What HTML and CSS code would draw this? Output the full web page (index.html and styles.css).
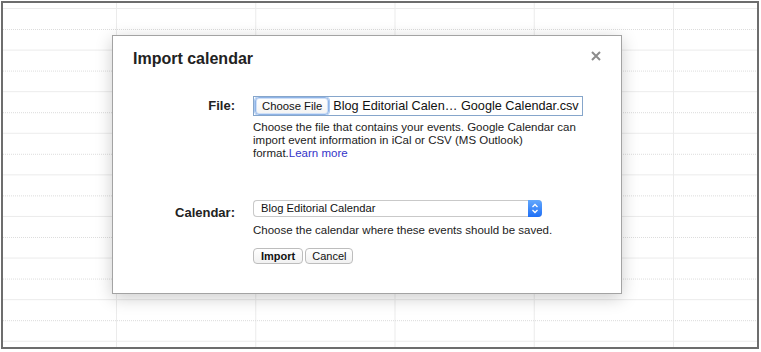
FILE: index.html
```html
<!DOCTYPE html>
<html lang="en">
<head>
    <meta charset="UTF-8">
    <meta name="viewport" content="width=device-width, initial-scale=1.0">
    <title>Import calendar</title>
    <link rel="stylesheet" href="styles.css">
</head>
<body>
    <div class="frame">
        <div class="grid"></div>

        <!-- import dialog -->
        <div class="dialog">
            <div class="dialog-head">
                <h2>Import calendar</h2>
                <svg class="close" width="10" height="10" viewBox="0 0 10 10">
                    <path d="M1 1 L9 9 M9 1 L1 9" stroke="#8c8c8c" stroke-width="2"/>
                </svg>
            </div>

            <div class="form-row">
                <label class="label">File:</label>
                <div class="control">
                    <div class="file-box">
                        <span class="file-btn">Choose File</span>
                        <span class="file-name">Blog Editorial Calen… Google Calendar.csv</span>
                    </div>
                    <p class="hint first">Choose the file that contains your events. Google Calendar can import event information in iCal or CSV (MS Outlook) format.<a href="#">Learn more</a></p>
                </div>
            </div>

            <div class="form-row cal-row">
                <label class="label cal-label">Calendar:</label>
                <div class="control">
                    <div class="select">
                        <span class="select-text">Blog Editorial Calendar</span>
                        <span class="select-arrow">
                            <svg width="14" height="17" viewBox="0 0 14 17">
                                <path d="M4.5 7 L7 4.5 L9.5 7 M4.5 10 L7 12.5 L9.5 10" fill="none" stroke="#fff" stroke-width="1.3"/>
                            </svg>
                        </span>
                    </div>
                    <p class="hint second">Choose the calendar where these events should be saved.</p>
                    <div class="buttons">
                        <button class="btn primary">Import</button>
                        <button class="btn">Cancel</button>
                    </div>
                </div>
            </div>
        </div>
    </div>
</body>
</html>
```

FILE: styles.css
```css
body { margin: 0; font-family: "Liberation Sans", Arial, sans-serif; color: #222; background: #fff; }

.frame {
    position: relative;
    margin: 1px 0 0 1px;
    width: 758px;
    height: 348px;
    border: 2px solid #6d6d6d;
    box-sizing: border-box;
    overflow: hidden;
}

/* calendar grid behind the dialog */
.grid {
    width: 100%;
    height: 100%;
    background-image:
        linear-gradient(to right, #ebebeb 1px, transparent 1px),
        linear-gradient(to bottom, #ebebeb 1px, transparent 1px);
    background-size: 139.25px 100%, 100% 41.6px;
    background-position: 113px 0, 0 5px;
}
.grid::before {
    content: "";
    position: absolute;
    inset: 0;
    background-image: linear-gradient(to bottom, #dcdcdc 1px, transparent 1px);
    background-size: 100% 41.6px;
    background-position: 0 26px;
    -webkit-mask-image: repeating-linear-gradient(to right, #000 0 1px, transparent 1px 2px);
    mask-image: repeating-linear-gradient(to right, #000 0 1px, transparent 1px 2px);
}

.dialog {
    position: absolute;
    left: 109px;
    top: 32px;
    width: 510px;
    box-sizing: border-box;
    padding: 14px 20px 29px 20px;
    background: #fff;
    border: 1px solid #a3a3a3;
    box-shadow: 0 4px 16px rgba(0, 0, 0, 0.2);
}

.dialog-head {
    display: flex;
    justify-content: space-between;
    align-items: flex-start;
}
.dialog-head h2 {
    margin: 0;
    font-size: 16px;
    line-height: 18px;
    font-weight: bold;
    color: #222;
}
.close { margin-top: 1px; }

.form-row {
    display: grid;
    grid-template-columns: 102px 1fr;
    column-gap: 18px;
    margin-top: 28px;
    align-items: baseline;
}
.cal-row { margin-top: 40px; align-items: start; }

.label {
    text-align: right;
    font-size: 13px;
    line-height: 15px;
    font-weight: bold;
    color: #222;
}
.cal-label { padding-top: 5px; }

.file-box {
    display: flex;
    align-items: center;
    width: 330px;
    height: 20px;
    box-sizing: border-box;
    border: 1px solid #86a6cb;
    padding-left: 1px;
    overflow: hidden;
}
.file-btn {
    flex-shrink: 0;
    white-space: nowrap;
    height: 18px;
    line-height: 16px;
    box-sizing: border-box;
    padding: 0 6px;
    font-size: 11.3px;
    color: #111;
    background: linear-gradient(#fff, #f3f3f3);
    border: 1px solid #8fb3e6;
    border-radius: 4px;
    box-shadow: 0 0 0 1px #a9c8f0, inset 0 0 0 1px #cfe0f7;
}
.file-name {
    margin-left: 4px;
    font-size: 12.7px;
    line-height: 18px;
    color: #111;
    white-space: nowrap;
}

.hint {
    margin: 0;
    font-size: 11.5px;
    line-height: 13px;
    color: #222;
    width: 330px;
}
.hint.first { margin-top: 5px; }
.hint.second { margin-top: 7px; }
.hint a { color: #3434c9; text-decoration: none; }

.select {
    display: flex;
    width: 289px;
    height: 17px;
    box-sizing: border-box;
    border: 1px solid #c9c9c9;
    border-right: none;
    border-radius: 4px;
    background: #fff;
}
.select-text {
    flex: 1;
    padding-left: 7px;
    font-size: 11.2px;
    line-height: 15px;
    color: #111;
}
.select-arrow {
    width: 14px;
    height: 17px;
    margin-top: -1px;
    border-radius: 0 4px 4px 0;
    background: linear-gradient(#62a8fd, #1f6ff6);
}
.select-arrow svg { display: block; }

.buttons {
    display: flex;
    gap: 2px;
    margin-top: 11px;
}
.btn {
    height: 16px;
    padding: 0 7px;
    font-family: "Liberation Sans", Arial, sans-serif;
    font-size: 11px;
    line-height: 14px;
    color: #111;
    background: linear-gradient(#fff, #f1f1f1);
    border: 1px solid #bdbdbd;
    border-radius: 4px;
}
.btn.primary { font-weight: bold; }
.btn + .btn { padding: 0 6px; }
```
